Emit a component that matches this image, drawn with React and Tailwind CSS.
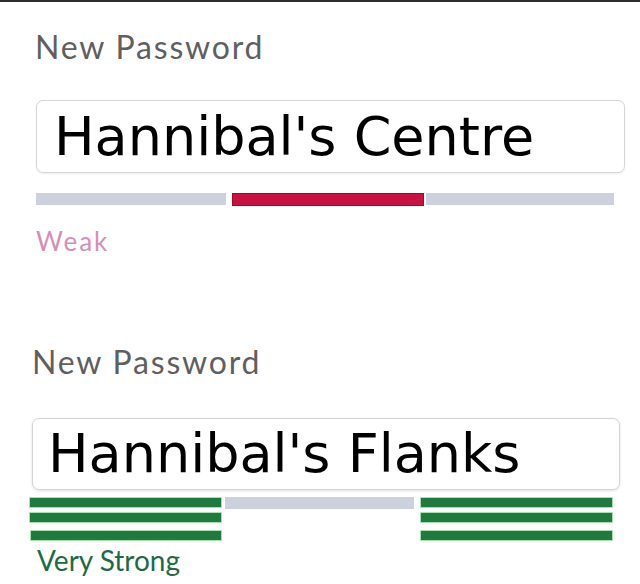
export default function App() {
  const label = "font-['Lato',sans-serif] text-[32px] leading-[40px] text-[#5f5f5f] tracking-[1.8px]";
  const big = "font-['DejaVu_Sans',sans-serif] text-[54px] leading-[60px] text-black";
  const greenBar = "h-[11px] bg-[#1e7b3d] border border-[#a8e0b2] rounded-[1px]";
  return (
    <div className="w-[640px] h-[584px] bg-white border-t-2 border-[#2e2e2e] overflow-hidden">
      {/* Section 1 */}
      <div className={`${label} pl-[35px] pt-[25px] h-[98px]`}>New Password</div>
      <div className="ml-[36px] w-[589px] h-[73px] border-[1.5px] border-[#d6d6d6] rounded-[7px] shadow-[0_1px_2px_rgba(0,0,0,0.08)] flex items-center pl-[17px]">
        <span className={big}>Hannibal's Centre</span>
      </div>
      <div className="flex ml-[36px] mt-[20px] h-[13px]">
        <div className="w-[190px] h-[12px] bg-[#cdd1dd]" />
        <div className="w-[192px] h-[13px] ml-[6px] bg-[#c9123f] border border-[#9a0c2e]" />
        <div className="w-[188px] h-[12px] ml-[2px] bg-[#cdd1dd]" />
      </div>
      <div className="font-['Lato',sans-serif] text-[26px] leading-[30px] tracking-[2px] text-[#d58fb6] pl-[36px] mt-[20px]">Weak</div>

      {/* Section 2 */}
      <div className={`${label} pl-[32px] mt-[86px] h-[76px]`}>New Password</div>
      <div className="ml-[32px] w-[588px] h-[72px] border-[1.5px] border-[#d3d3d3] rounded-[7px] shadow-[0_1px_3px_rgba(0,0,0,0.12)] flex items-center pl-[15px]">
        <span className={big}>Hannibal's Flanks</span>
      </div>
      <div className="flex ml-[29px] mt-[7px]">
        <div className="w-[193px] flex flex-col gap-[4px]">
          <div className={greenBar} />
          <div className={greenBar} />
          <div className={`${greenBar} mt-[3px] ml-[1px]`} />
        </div>
        <div className="w-[189px] h-[12px] ml-[3px] bg-[#cdd1dd]" />
        <div className="w-[193px] ml-[6px] flex flex-col gap-[4px]">
          <div className={greenBar} />
          <div className={greenBar} />
          <div className={`${greenBar} mt-[3px]`} />
        </div>
      </div>
      <div className="font-['Lato',sans-serif] text-[28px] leading-[32px] text-[#1e6a44] pl-[37px] mt-[3px]">Very Strong</div>
    </div>
  );
}
